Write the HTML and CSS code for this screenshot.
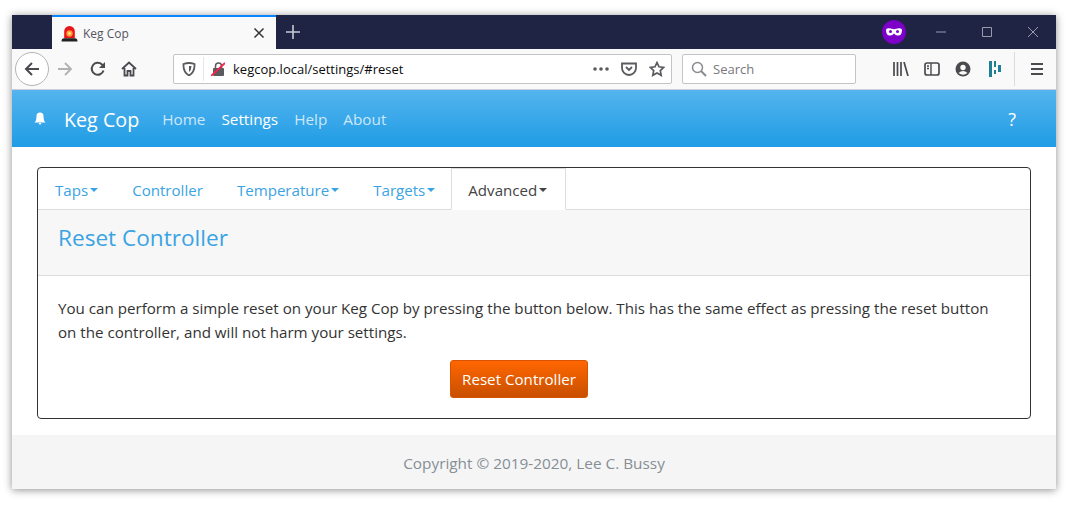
FILE: index.html

```html
<!DOCTYPE html>
<html>
  <head>
    <title>Keg Cop</title>
    <link rel="stylesheet" href="styles.css">
  </head>
  <body>
    <div class="window">
      <div class="titlebar">
        <div class="tab">
          <svg class="favicon" width="17" height="17" viewBox="0 0 16 16">
            <path d="M3 12.500V6a5 5 0 0 1 10 0v6.500z" fill="#e8141c"/>
            <circle cx="8" cy="8" r="3" fill="#ff9a2e"/>
            <circle cx="8" cy="8" r="1.300" fill="#ffe08a"/>
            <path d="M.5 15.500q0-3 2.500-3h10q2.500 0 2.500 3z" fill="#222"/>
          </svg>
          <span class="tab-title">Keg Cop</span>
          <svg class="tab-close" width="12" height="12" viewBox="0 0 12 12"><path d="M1.500 1.500l9 9M10.500 1.500l-9 9" stroke="#333" stroke-width="1.500" fill="none"/></svg>
        </div>
        <svg class="newtab" width="14" height="14" viewBox="0 0 14 14"><path d="M7 0v14M0 7h14" stroke="#c8cad4" stroke-width="1.600"/></svg>
        <div class="title-right">
          <svg class="mask" width="24" height="24" viewBox="0 0 24 24">
            <circle cx="12" cy="12" r="12" fill="#7d00c8"/>
            <path d="M4 10q0-2 3-1.700q3 .4 5 1q2-.6 5-1q3-.3 3 1.700q0 6-4.500 5.500q-2 0-3.500-2q-1.500 2-3.500 2q-4.500 .5-4.500-5.500z" fill="#fff"/>
            <circle cx="8.500" cy="11.500" r="1.500" fill="#7d00c8"/>
            <circle cx="15.500" cy="11.500" r="1.500" fill="#7d00c8"/>
          </svg>
          <div class="winbtns">
            <svg width="10" height="10" viewBox="0 0 10 10"><path d="M0 5h10" stroke="#9a9cae"/></svg>
            <svg width="10" height="10" viewBox="0 0 10 10"><path d="M.5 .5h9v9h-9z" stroke="#9a9cae" fill="none"/></svg>
            <svg width="10" height="10" viewBox="0 0 10 10"><path d="M0 0l10 10M10 0L0 10" stroke="#9a9cae" fill="none"/></svg>
          </div>
        </div>
      </div>

      <div class="toolbar">
        <div class="backbtn">
          <svg width="16" height="16" viewBox="0 0 16 16"><path d="M15 8H2M8 2L2 8l6 6" stroke="#4a4a4f" stroke-width="2" fill="none"/></svg>
        </div>
        <svg class="tool-forward" width="16" height="16" viewBox="0 0 16 16"><path d="M1 8h13M8 2l6 6-6 6" stroke="#b1b1b3" stroke-width="1.800" fill="none"/></svg>
        <svg class="tool-reload" width="16" height="16" viewBox="0 0 16 16"><path d="M13.500 9.500A6 6 0 1 1 12 3.500L14 5.500" stroke="#4a4a4f" stroke-width="2" fill="none"/><path d="M15 1v6H9z" fill="#4a4a4f"/></svg>
        <svg class="tool-home" width="16" height="16" viewBox="0 0 16 16"><path d="M1 8l7-6.500L15 8M3.500 7v7.500h3V10h3v4.500h3V7" stroke="#4a4a4f" stroke-width="1.800" fill="none"/></svg>

        <div class="urlbar">
          <svg class="shield" width="14" height="14" viewBox="0 0 14 14"><path d="M1.500 2Q7 0 12.500 2q.5 8-5.500 11.500Q1 10 1.500 2z" stroke="#5a5a5f" stroke-width="1.800" fill="none"/><path d="M7 4h2.500q0 4-2.500 6z" fill="#5a5a5f"/></svg>
          <span class="urlsep"></span>
          <svg class="nolock" width="14" height="14" viewBox="0 0 14 14"><rect x="2" y="6" width="11" height="8" rx="1" fill="#5a5a5f"/><path d="M4.500 6V4a3 3 0 0 1 6 0v2" stroke="#5a5a5f" stroke-width="1.500" fill="none"/><path d="M0 14L14 1" stroke="#ff1f4b" stroke-width="1.800"/></svg>
          <span class="url">kegcop.local/settings/#reset</span>
          <svg class="url-dots" width="16" height="4" viewBox="0 0 16 4"><circle cx="2" cy="2" r="1.800" fill="#5a5a5f"/><circle cx="8" cy="2" r="1.800" fill="#5a5a5f"/><circle cx="14" cy="2" r="1.800" fill="#5a5a5f"/></svg>
          <svg class="pocket" width="16" height="14" viewBox="0 0 16 14"><path d="M1 1.500h14V6a7 7 0 0 1-14 0z" stroke="#5a5a5f" stroke-width="1.800" fill="none"/><path d="M5 5l3 3 3-3" stroke="#5a5a5f" stroke-width="1.800" fill="none"/></svg>
          <svg class="star" width="16" height="16" viewBox="0 0 16 16"><path d="M8 1.500l2 4.300 4.700.6-3.400 3.200.9 4.700L8 12l-4.200 2.300.9-4.700L1.300 6.400 6 5.800z" stroke="#5a5a5f" stroke-width="1.700" fill="none"/></svg>
        </div>

        <div class="searchbar">
          <svg width="16" height="16" viewBox="0 0 16 16"><circle cx="6.500" cy="6.500" r="5" stroke="#8a8a8f" stroke-width="1.500" fill="none"/><path d="M10 10l5 5" stroke="#8a8a8f" stroke-width="2"/></svg>
          <span>Search</span>
        </div>

        <div class="tool-icons">
          <svg width="16" height="14" viewBox="0 0 16 14"><path d="M1 0v14M4.500 0v14M8 0v14M11 0l4 14" stroke="#4a4a4f" stroke-width="1.700" fill="none"/></svg>
          <svg width="16" height="14" viewBox="0 0 16 14"><rect x="1" y="1" width="14" height="12" rx="2" stroke="#4a4a4f" stroke-width="1.700" fill="none"/><path d="M7 1v12M3 4h2M3 6.500h2" stroke="#4a4a4f" stroke-width="1.400"/></svg>
          <svg width="16" height="16" viewBox="0 0 16 16"><circle cx="8" cy="8" r="7.500" fill="#4a4a4f"/><circle cx="8" cy="6.500" r="2.700" fill="#f9f9fa"/><path d="M3.500 12q4.500-4 9 0q-4.500 3.500-9 0z" fill="#f9f9fa"/></svg>
          <svg class="pinned" width="12" height="16" viewBox="0 0 12 16"><path d="M0 0h3v16H0zM5 0h2v6H5zM5 9h2v4H5zM9 4h3v7H9z" fill="#1f7f94"/></svg>
        </div>
        <span class="toolsep"></span>
        <svg class="hamburger" width="14" height="12" viewBox="0 0 14 12"><path d="M1 1h12M1 6h12M1 11h12" stroke="#4a4a4f" stroke-width="1.800"/></svg>
      </div>

      <nav class="navbar">
        <svg class="bell" width="12" height="13" viewBox="0 0 12 13"><path d="M.5 10.500q2-1.500 2-6.500a3.500 3.500 0 0 1 7 0q0 5 2 6.500z" fill="#fff"/><path d="M4.500 11h3L6 13z" fill="#fff"/></svg>
        <a class="brand">Keg Cop</a>
        <a class="navlink">Home</a>
        <a class="navlink active">Settings</a>
        <a class="navlink">Help</a>
        <a class="navlink">About</a>
        <a class="navhelp">?</a>
      </nav>

      <main class="content">
        <div class="card">
          <div class="tabs">
            <a class="tablink caret">Taps</a>
            <a class="tablink">Controller</a>
            <a class="tablink caret">Temperature</a>
            <a class="tablink caret">Targets</a>
            <a class="tablink caret current">Advanced</a>
          </div>
          <div class="card-header">
            <h4>Reset Controller</h4>
          </div>
          <div class="card-body">
            <p>You can perform a simple reset on your Keg Cop by pressing the button below. This has the same effect as pressing the reset button on the controller, and will not harm your settings.</p>
            <button class="btn-reset">Reset Controller</button>
          </div>
        </div>
      </main>

      <footer class="footer">Copyright © 2019-2020, Lee C. Bussy</footer>
    </div>
  </body>
</html>
```

FILE: styles.css

```css
* {box-sizing: border-box;}
html, body {height: 100%;}
body {margin: 0; background: #fff; font-family: "Open Sans", "Noto Sans", sans-serif; overflow: hidden;}

.window {margin: 15px 20px 0 12px; height: 474px; display: flex; flex-direction: column; box-shadow: 0 1px 8px rgba(0,0,0,.45); background: #fff;}

.titlebar {height: 34px; flex: none; background: #1f2344; display: flex; align-items: center; padding-left: 40px;}
.tab {width: 224px; height: 34px; background: #f9f9fa; border-top: 2px solid #0a84ff; display: flex; align-items: center; padding: 0 11px 0 9px;}
.favicon {flex: none;}
.tab-title {font-size: 12px; color: #55555f; margin-left: 5px; flex: 1;}
.newtab {margin-left: 10px;}
.title-right {margin-left: auto; display: flex; align-items: center;}
.winbtns {display: flex; gap: 36px; margin-left: 30px; margin-right: 18px; align-items: center;}

.toolbar {height: 41px; flex: none; background: #f9f9fa; border-bottom: 1px solid #ccd; display: flex; align-items: center; padding-left: 3px;}
.backbtn {width: 34px; height: 34px; border-radius: 50%; border: 1px solid #b5b5b8; background: #fff; display: flex; align-items: center; justify-content: center;}
.tool-forward {margin-left: 8px;}
.tool-reload {margin-left: 17px;}
.tool-home {margin-left: 15px;}
.urlbar {width: 499px; height: 30px; margin-left: 36px; background: #fff; border: 1px solid #c4c4c6; border-radius: 2px; display: flex; align-items: center; padding: 0 6px 0 8px;}
.urlsep {width: 1px; height: 24px; background: #e6e6e8; margin-left: 7px;}
.nolock {margin-left: 7px;}
.url {font-size: 13px; color: #0c0c0d; margin-left: 8px; flex: 1;}
.pocket {margin-left: 12px;}
.star {margin-left: 12px;}
.searchbar {width: 174px; height: 30px; margin-left: 10px; background: #fff; border: 1px solid #c4c4c6; border-radius: 2px; display: flex; align-items: center; padding-left: 8px; gap: 6px; font-size: 13px; color: #77777c;}
.tool-icons {display: flex; align-items: center; gap: 15px; margin-left: 37px;}
.pinned {margin-left: 3px;}
.toolsep {width: 1px; height: 34px; background: #dcdcde; margin-left: 13px;}
.hamburger {margin-left: 15px;}

.navbar {height: 57px; flex: none; background: linear-gradient(#54b4ee, #1f9ce5); display: flex; align-items: center; padding-left: 22px; color: #fff;}
.bell {flex: none;}
.brand {font-size: 19.7px; margin-left: 18px; margin-right: 15px; padding-top: 2px;}
.navlink {font-size: 15.3px; padding: 0 8px; color: rgba(255,255,255,.75);}
.navlink.active {color: #fff;}
.navhelp {font-size: 18px; margin-left: auto; margin-right: 40px;}

.content {flex: 1; padding: 20px 25px 16px;}
.card {border: 1px solid #333; border-radius: 4px; height: 252px; display: flex; flex-direction: column;}
.tabs {height: 42px; flex: none; display: flex; border-bottom: 1px solid #ddd;}
.tablink {font-size: 15.1px; color: #3aa3e3; padding: 0 16px; height: 41px; line-height: 42px; border: 1px solid transparent;}
.caret::after {content: ""; display: inline-block; margin-left: 2px; vertical-align: 4px; border-top: 4px solid; border-left: 4px solid transparent; border-right: 4px solid transparent;}
.tablink.current {color: #444; background: #fff; border-color: #ddd; border-bottom: 1px solid #fff; height: 42px; margin-left: -1px; padding: 0 18px 0 16px;}
.card-header {height: 66px; flex: none; background: #f7f7f7; border-bottom: 1px solid #ddd; padding: 13px 20px;}
.card-header h4 {margin: 0; font-size: 22.6px; font-weight: 400; color: #3aa3e3; line-height: 30px;}
.card-body {flex: 1; padding: 20px 20px; color: #333; font-size: 15.15px;}
.card-body p {margin: 0 0 16px; line-height: 24px; padding-right: 12px;}
.btn-reset {display: block; margin: 0 0 0 392px; width: 138px; height: 38px; padding: 0; border: 1px solid #d95400; border-radius: 3px; background: linear-gradient(#ff6600, #c85000); color: #fff; font: inherit;}

.footer {height: 54px; flex: none; background: #f5f5f5; display: flex; align-items: center; justify-content: center; padding-top: 2px; font-size: 15.35px; color: #868e96;}
```
